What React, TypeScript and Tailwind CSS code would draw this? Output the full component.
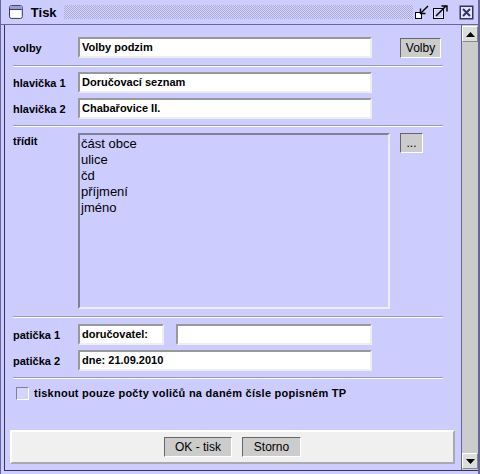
import React from "react";

const inputCls =
  "h-[21px] bg-white border-2 border-t-[#999999] border-l-[#999999] border-b-[#eeeeee] border-r-[#eeeeee] px-[2px] text-[11px] font-bold text-black leading-[17px] outline-none";

const buttonCls =
  "h-[20px] bg-[#cccccc] border border-t-[#666666] border-l-[#666666] border-b-white border-r-white text-[12px] text-black leading-[18px] flex items-center justify-center";

function Separator({ mt }: { mt: string }) {
  return (
    <div className={`${mt} ml-[8px] w-[430px] h-[2px] border-t border-t-[#9999bb] border-b border-b-white`} />
  );
}

function Label({ children }: { children: React.ReactNode }) {
  return (
    <div className="w-[73px] pl-[8px] shrink-0 text-[11px] font-bold text-black leading-[14px]">{children}</div>
  );
}

function TitleButtons() {
  return (
    <div className="flex items-center h-full">
      <svg width="14" height="14" viewBox="0 0 14 14" className="ml-[2px]">
        <rect x="0.5" y="7.5" width="6" height="6" fill="#ffffff" stroke="#000000" />
        <path d="M13 1 L6 8" stroke="#000000" strokeWidth="1.4" />
        <path d="M5.5 3.5 V8.5 H10.5" stroke="#000000" strokeWidth="1.4" fill="none" />
      </svg>
      <svg width="15" height="14" viewBox="0 0 15 14" className="ml-[4px]">
        <rect x="0.5" y="3.5" width="10" height="10" fill="#ffffff" stroke="#000000" />
        <rect x="1.5" y="4.5" width="8" height="8" fill="#ccccff" />
        <path d="M3 11 L13 1" stroke="#000000" strokeWidth="1.4" />
        <path d="M8.5 1 H14 V6.5" stroke="#000000" strokeWidth="1.4" fill="none" />
      </svg>
      <svg width="15" height="15" viewBox="0 0 15 15" className="ml-[11px]">
        <rect x="0.5" y="0.5" width="14" height="14" fill="#333366" />
        <rect x="2" y="2" width="11" height="11" fill="#e4e4f4" />
        <path d="M4 4 L11 11 M11 4 L4 11" stroke="#333366" strokeWidth="2" />
      </svg>
    </div>
  );
}

function ScrollButton({ up }: { up: boolean }) {
  return (
    <div className="w-[16px] h-[16px] bg-[#dddddd] border border-t-white border-l-white border-b-[#888888] border-r-[#888888] flex items-center justify-center">
      <svg width="9" height="5" viewBox="0 0 9 5">
        {up ? <path d="M0 5 L4.5 0 L9 5 Z" fill="#000000" /> : <path d="M0 0 L9 0 L4.5 5 Z" fill="#000000" />}
      </svg>
    </div>
  );
}

export default function App() {
  return (
    <div className="w-[480px] h-[474px] bg-[#ccccff] border-l border-l-[#666699] border-r-2 border-r-[#666699] pb-[3px] flex flex-col font-['Liberation_Sans',Arial,sans-serif] text-black">
      {/* title bar */}
      <div className="h-[25px] shrink-0 border-b border-b-[#666699] flex items-center pl-[8px] pr-[4px]">
        <svg width="14" height="14" viewBox="0 0 14 14">
          <rect x="0.5" y="0.5" width="13" height="13" rx="2" fill="#ffffff" stroke="#333366" />
          <rect x="1" y="1" width="12" height="3" fill="#9999cc" />
          <line x1="1" y1="4.5" x2="13" y2="4.5" stroke="#333366" />
        </svg>
        <span className="ml-[8px] text-[13px] font-bold leading-none">Tisk</span>
        <div className="ml-[7px] w-[354px] h-[14px] bg-[repeating-conic-gradient(#a8a8dd_0_25%,#d6d6ff_0_50%)] bg-[length:2px_2px]" />
        <TitleButtons />
      </div>

      {/* body */}
      <div className="flex-1 flex min-h-0 border-l border-l-[#333366] ml-[3px] border-b border-b-[#333366]">
        <div className="flex-1 flex flex-col pt-[12px]">
          <div className="flex items-center">
            <Label>volby</Label>
            <div className={`${inputCls} w-[294px]`}>Volby podzim</div>
            <div className={`${buttonCls} ml-[28px] w-[41px]`}>Volby</div>
          </div>

          <Separator mt="mt-[7px]" />

          <div className="flex items-center mt-[5px]">
            <Label>hlavička 1</Label>
            <div className={`${inputCls} w-[294px]`}>Doručovací seznam</div>
          </div>
          <div className="flex items-center mt-[5px]">
            <Label>hlavička 2</Label>
            <div className={`${inputCls} w-[294px]`}>Chabařovice II.</div>
          </div>

          <Separator mt="mt-[6px]" />

          <div className="flex items-start mt-[6px]">
            <div className="pt-[1px]">
              <Label>třídit</Label>
            </div>
            <div className="w-[312px] h-[176px] border-2 border-t-[#808099] border-l-[#808099] border-b-[#eeeeff] border-r-[#eeeeff] pl-[1px] pt-[1px] text-[13px] leading-[16px] font-normal">
              <div>část obce</div>
              <div>ulice</div>
              <div>čd</div>
              <div>příjmení</div>
              <div>jméno</div>
            </div>
            <div className={`${buttonCls} ml-[10px] w-[23px]`}>...</div>
          </div>

          <Separator mt="mt-[7px]" />

          <div className="flex items-center mt-[6px]">
            <Label>patička 1</Label>
            <div className={`${inputCls} w-[86px]`}>doručovatel:</div>
            <div className={`${inputCls} w-[196px] ml-[12px]`}></div>
          </div>
          <div className="flex items-center mt-[5px]">
            <Label>patička 2</Label>
            <div className={`${inputCls} w-[294px]`}>dne: 21.09.2010</div>
          </div>

          <Separator mt="mt-[6px]" />

          <div className="flex items-center mt-[7px] ml-[11px]">
            <div className="w-[13px] h-[13px] border border-t-[#808099] border-l-[#808099] border-b-white border-r-white bg-[#d4d4ff]" />
            <span className="ml-[5px] text-[11px] font-bold leading-[14px] tracking-[0.25px]">
              tisknout pouze počty voličů na daném čísle popisném TP
            </span>
          </div>

          <div className="mt-[30px] ml-[5px] w-[445px] h-[34px] bg-[#f0f0f0] border-2 border-t-white border-l-white border-b-[#aaaaaa] border-r-[#aaaaaa] flex items-center justify-center gap-[10px]">
            <div className={`${buttonCls} w-[68px]`}>OK - tisk</div>
            <div className={`${buttonCls} w-[59px]`}>Storno</div>
          </div>
        </div>

        {/* scrollbar */}
        <div className="w-[17px] shrink-0 border-l border-l-[#666699] bg-[#cccccc] flex flex-col justify-between pt-[1px] pb-[1px]">
          <ScrollButton up />
          <ScrollButton up={false} />
        </div>
      </div>
    </div>
  );
}
